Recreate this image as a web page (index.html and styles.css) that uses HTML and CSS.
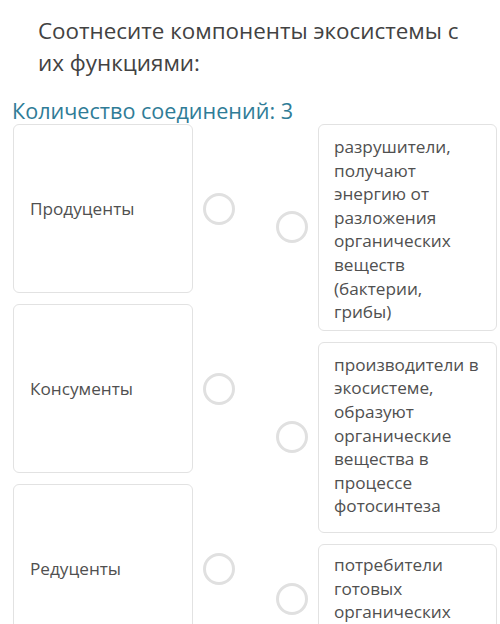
FILE: index.html
```html
<!DOCTYPE html>
<html lang="ru">
<head>
<meta charset="utf-8">
<link rel="stylesheet" href="styles.css">
</head>
<body>
<div class="page">
  <h1 class="title">Соотнесите компоненты экосистемы с их функциями:</h1>
  <div class="count">Количество соединений: 3</div>
  <div class="match">
    <div class="col-left">
      <div class="row-left">
        <div class="card card-left">Продуценты</div>
        <span class="dot"></span>
      </div>
      <div class="row-left">
        <div class="card card-left">Консументы</div>
        <span class="dot"></span>
      </div>
      <div class="row-left">
        <div class="card card-left">Редуценты</div>
        <span class="dot"></span>
      </div>
    </div>
    <div class="col-right">
      <div class="row-right">
        <span class="dot"></span>
        <div class="card card-right r1">разрушители, получают энергию от разложения органических веществ (бактерии, грибы)</div>
      </div>
      <div class="row-right">
        <span class="dot"></span>
        <div class="card card-right r2">производители в экосистеме, образуют органические вещества в процессе фотосинтеза</div>
      </div>
      <div class="row-right">
        <span class="dot"></span>
        <div class="card card-right r3">потребители готовых органических веществ</div>
      </div>
    </div>
  </div>
</div>
</body>
</html>
```
FILE: styles.css
```css
html, body {
  margin: 0;
  padding: 0;
  background: #ffffff;
}
body {
  font-family: "Open Sans", "Noto Sans", sans-serif;
  width: 500px;
  height: 624px;
  overflow: hidden;
}
.page {
  padding: 15px 0 0 13px;
}
.title {
  margin: 0 0 0 25px;
  width: 432px;
  font-size: 22.4px;
  font-weight: 400;
  line-height: 32px;
  color: #424242;
}
.count {
  margin: 19px 0 0 -1px;
  font-size: 21.6px;
  line-height: 26px;
  color: #2f7c97;
}
.match {
  display: flex;
  margin-top: 0;
}
.col-left {
  display: flex;
  flex-direction: column;
  gap: 11px;
}
.row-left {
  display: flex;
  align-items: center;
  gap: 10px;
}
.col-right {
  margin-left: 41px;
  display: flex;
  flex-direction: column;
  gap: 11px;
}
.row-right {
  display: flex;
  align-items: center;
  gap: 10px;
}
.card {
  box-sizing: border-box;
  border: 1.5px solid #e2e2e2;
  border-radius: 6px;
  background: #ffffff;
  color: #505050;
  font-size: 17.2px;
}
.card-left {
  width: 180px;
  height: 169px;
  display: flex;
  align-items: center;
  padding-left: 16px;
}
.card-right {
  width: 179px;
  padding: 10px 14.5px 6px 15px;
  line-height: 23.6px;
}
.card-right.r2 {
  padding-bottom: 14px;
}
.card-right.r3 {
  padding-top: 8px;
}
.dot {
  box-sizing: border-box;
  width: 32px;
  height: 32px;
  border: 3px solid #e0e0e0;
  border-radius: 50%;
  flex: none;
}
```
